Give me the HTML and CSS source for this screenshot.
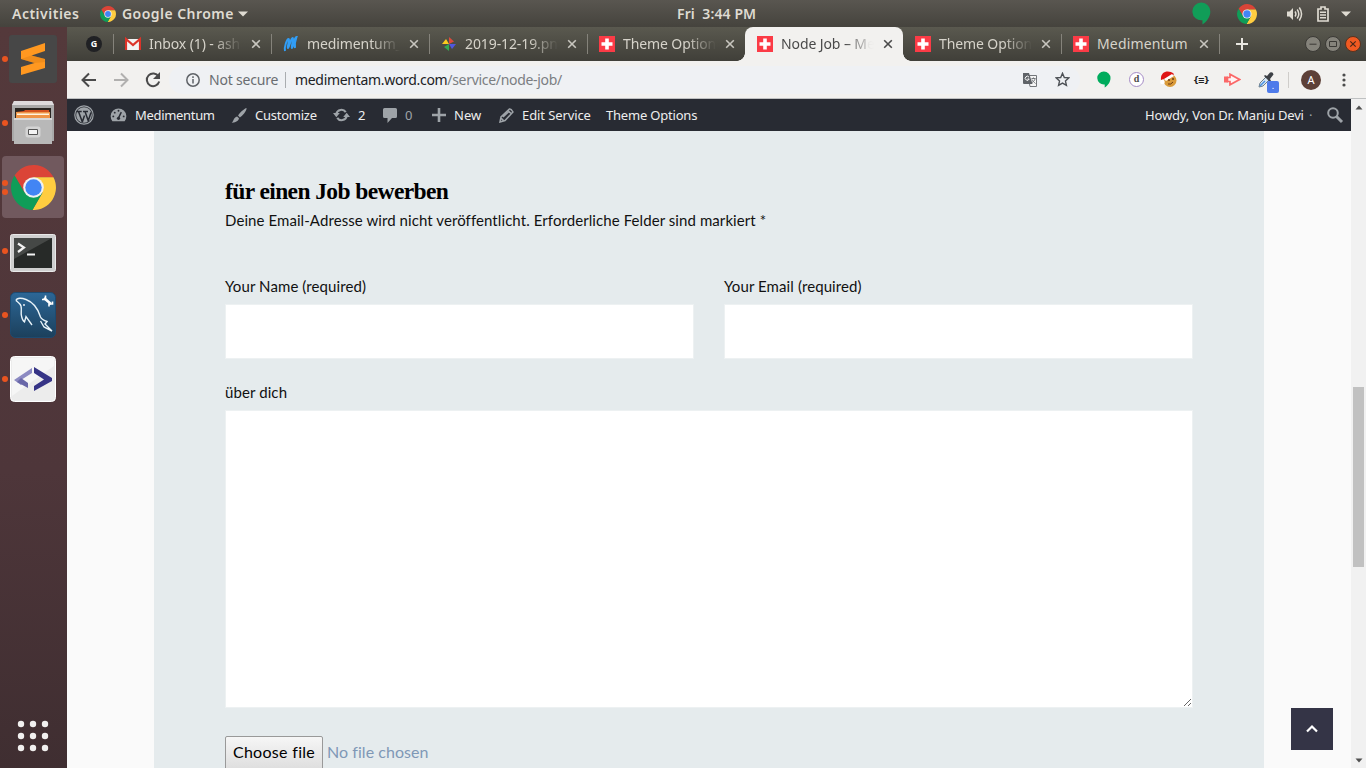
FILE: index.html
```html
<!DOCTYPE html>
<html lang="de">
<head>
<meta charset="utf-8">
<title>Node Job – Medimentum</title>
<link rel="stylesheet" href="styles.css">
</head>
<body>
<svg width="0" height="0" class="defs">
  <symbol id="chrome" viewBox="0 0 48 48">
    <path fill="#db4437" d="M3.8 11.1A24 24 0 0 1 45.3 13H24L14.5 29.5z"/>
    <path fill="#ffcd40" d="M45.3 13A24 24 0 0 1 22.9 48L33.5 29.5L24 13z"/>
    <path fill="#0f9d58" d="M22.9 48A24 24 0 0 1 3.8 11.1L14.5 29.5H33.5z"/>
    <circle cx="24" cy="24" r="11" fill="#f1f1f1"/><circle cx="24" cy="24" r="8.8" fill="#4285f4"/>
  </symbol>
  <symbol id="swiss" viewBox="0 0 16 16"><path fill="#fb3b46" d="M0 0h16v16H0z"/><path fill="#fff" d="M6.200 2.500h3.600v3.700h3.700v3.600H9.800v3.700H6.200V9.800H2.500V6.200h3.700z"/></symbol>
  <symbol id="close" viewBox="0 0 10 10"><path d="M1.200 1.200l7.600 7.600M8.800 1.200L1.200 8.800" stroke="currentColor" stroke-width="1.600" fill="none"/></symbol>
  <symbol id="hangouts" viewBox="0 0 20 24"><path d="M10 .5a9.300 9.300 0 0 1 9.300 9.400c0 5.500-3.500 10.500-8.300 13.600V19A9.300 9.300 0 1 1 10 .5z" fill="currentColor"/></symbol>
</svg>

<header class="topbar">
  <span class="activities">Activities</span>
  <svg class="app-icon" width="16" height="16"><use href="#chrome"/></svg>
  <span class="app-name">Google Chrome</span>
  <svg width="10" height="6" viewBox="0 0 10 6"><path d="M0 .5h10L5 5.500z" fill="#dfdbd2"/></svg>
  <span class="clock">Fri&nbsp; 3:44 PM</span>
  <div class="tray">
    <svg class="hang" width="19" height="23"><use href="#hangouts"/></svg>
    <svg class="tray-chrome" width="20" height="20"><use href="#chrome"/></svg>
    <svg class="sound" width="17" height="16" viewBox="0 0 17 16" fill="none" stroke="#dfdbd2" stroke-width="1.500"><path d="M1 5.500h2.500L7 2v12l-3.500-3.500H1z" fill="#dfdbd2" stroke="none"/><path d="M9 5.500q1.800 2.500 0 5M11.200 3.500q3.200 4.500 0 9M13.300 1.500q4.500 6.500 0 13"/></svg>
    <svg class="battery" width="12" height="16" viewBox="0 0 12 16"><path d="M1 3h3V1h4v2h3v12H1z" fill="none" stroke="#dfdbd2" stroke-width="1.700"/><path d="M3 6.200h6M3 9h6M3 11.800h6" stroke="#dfdbd2" stroke-width="1.500"/></svg>
    <svg width="10" height="6" viewBox="0 0 10 6"><path d="M0 .5h10L5 5.500z" fill="#dfdbd2"/></svg>
  </div>
</header>

<div class="desktop">
  <nav class="dock">
    <div class="dock-item">
      <svg width="48" height="48" viewBox="0 0 48 48"><rect width="48" height="48" rx="3" fill="#474747"/><path fill="#ff9820" d="M12 16L36 8v8L22.500 20.500 36 24v9L12 40v-8l13.500-4L12 24z"/><path fill="#d97c13" d="M22.500 20.500L36 24v3l-10.500 1L12 24z" opacity=".4"/></svg>
      <i class="dot"></i>
    </div>
    <div class="dock-item">
      <svg width="44" height="46" viewBox="0 0 44 46"><path d="M3 1h38l2 4v36h-2v3H3v-3H1V5z" fill="#a9a9a9"/><path d="M3 1h38l2 4H1z" fill="#dedbdd"/><path d="M4 8h36v12H4z" fill="#292522"/><path d="M5 12l8-1 1-1h24l1 10H5z" fill="#d65420"/><path d="M5 12h34v8H5z" fill="#ef9547"/><path d="M6 13.500h32v1.500H6z" fill="#fff4df"/><path d="M3 18h38v26H3z" fill="#b8b8b8"/><path d="M3 18h38v2H3z" fill="#d8d8d8"/><rect x="16" y="28" width="12" height="8" rx="1" fill="#eee" stroke="#d4d4d4" stroke-width="3"/><path d="M17.500 29.500h9v5h-9z" fill="#f3f3f3" stroke="#555"/></svg>
      <i class="dot"></i>
    </div>
    <div class="dock-item">
      <div class="dock-active"><svg width="45" height="45"><use href="#chrome"/></svg></div>
      <i class="dot"></i><i class="dot second"></i>
    </div>
    <div class="dock-item low">
      <svg width="46" height="38" viewBox="0 0 46 38"><rect x=".5" y=".5" width="45" height="37" rx="2" fill="#cfcfcf" stroke="#e9e9e9"/><path d="M4 4h38v30H4z" fill="#272a28"/><path d="M4 4h38L4 25z" fill="#454846"/><path d="M8 9.500l6 4-6 4.500M17 20.500h8" fill="none" stroke="#f2f2f2" stroke-width="2.200"/></svg>
      <i class="dot"></i>
    </div>
    <div class="dock-item">
      <svg width="46" height="46" viewBox="0 0 46 46"><defs><linearGradient id="sea" x2="0" y2="1"><stop stop-color="#2c6797"/><stop offset="1" stop-color="#1c405c"/></linearGradient></defs><rect x=".5" y=".5" width="45" height="45" rx="5" fill="url(#sea)" stroke="#1d4a70"/><path d="M6 8.500C7 5.500 12 6 16 7.500c8 3 12 9 14.500 17.500 1 2 3.500 3.500 6.500 4.500l-2 2.500 7 7-8-4-3.500-6M6 8.500c1.500 1.500 4 2.500 5 5.500 1 4-.5 7 .5 10 .5 3 1.500 5 3 6l1.500-5.500L22 33" fill="none" stroke="#e8f3f9" stroke-width="1.400"/><circle cx="14" cy="13" r=".9" fill="#fff"/><path d="M34 6l7 6" stroke="#fff" stroke-width="2.600"/><path d="M32 7.500h3.500V3.500M42.500 9.500V12H39v2.500" fill="none" stroke="#fff" stroke-width="1.600"/></svg>
      <i class="dot"></i>
    </div>
    <div class="dock-item">
      <svg width="46" height="46" viewBox="0 0 46 46"><rect x=".5" y=".5" width="45" height="45" rx="4" fill="#ececec" stroke="#fff"/><path d="M2 2h42v8L2 40z" fill="#f6f6f6"/><path fill="#8c8ac2" d="M22 12v5l-11 7 3 2-3 3-7-5z"/><path fill="#6967a8" d="M11 22l7 5v5L7 26z"/><path fill="#363486" d="M24 11l18 11v3L24 35v-5l10-6.500L24 17z"/></svg>
      <i class="dot"></i>
    </div>
    <svg class="apps" width="32" height="32" viewBox="0 0 32 32" fill="#f1f0ef"><circle cx="4" cy="4" r="3.200"/><circle cx="16" cy="4" r="3.200"/><circle cx="28" cy="4" r="3.200"/><circle cx="4" cy="16" r="3.200"/><circle cx="16" cy="16" r="3.200"/><circle cx="28" cy="16" r="3.200"/><circle cx="4" cy="28" r="3.200"/><circle cx="16" cy="28" r="3.200"/><circle cx="28" cy="28" r="3.200"/></svg>
  </nav>

  <div class="browser">
    <div class="tabs">
      <div class="pinned"><span class="g-icon">G</span></div>
      <div class="tab"><svg width="16" height="16" viewBox="0 0 16 16"><path d="M1 3h14v11H1z" fill="#f3f3f3"/><path d="M1 14V3l7 6 7-6v11" fill="none" stroke="#dc3329" stroke-width="2.200"/></svg><span class="title">Inbox (1) - ash</span><svg class="x" width="10" height="10"><use href="#close"/></svg></div>
      <div class="tab"><svg width="16" height="16" viewBox="0 0 16 16"><path d="M2 15C1 11 4 3 5.500 3S4 12 5 12 8 2 9.500 2 8 12 9 12s2-11 4.500-11c-1.500 4-2 8-1.500 11" fill="none" stroke="#319df5" stroke-width="2"/></svg><span class="title">medimentum_</span><svg class="x" width="10" height="10"><use href="#close"/></svg></div>
      <div class="tab"><svg width="16" height="16" viewBox="0 0 16 16"><path d="M8 8V1l5 4.500L8 8z" fill="#de4a3c"/><path d="M8 8h7l-4 5z" fill="#5057df"/><path d="M8 8v7l-5-4z" fill="#34a853"/><path d="M8 8H1l4-5z" fill="#fbcb1e"/></svg><span class="title">2019-12-19.pn</span><svg class="x" width="10" height="10"><use href="#close"/></svg></div>
      <div class="tab"><svg width="16" height="16"><use href="#swiss"/></svg><span class="title">Theme Option</span><svg class="x" width="10" height="10"><use href="#close"/></svg></div>
      <div class="tab active"><svg width="16" height="16"><use href="#swiss"/></svg><span class="title">Node Job – M<span class="rest">e</span></span><svg class="x" width="10" height="10"><use href="#close"/></svg></div>
      <div class="tab after-active"><svg width="16" height="16"><use href="#swiss"/></svg><span class="title">Theme Option</span><svg class="x" width="10" height="10"><use href="#close"/></svg></div>
      <div class="tab"><svg width="16" height="16"><use href="#swiss"/></svg><span class="title whole">Medimentum</span><svg class="x" width="10" height="10"><use href="#close"/></svg></div>
      <div class="new-tab"><svg width="12" height="12" viewBox="0 0 12 12"><path d="M6 0v12M0 6h12" stroke="#e8e6e0" stroke-width="2"/></svg></div>
      <div class="window-buttons">
        <svg width="16" height="16" viewBox="0 0 16 16"><circle cx="8" cy="8" r="7.500" fill="#85837b" stroke="#3b3a36"/><path d="M4.500 8.200h7" stroke="#3a3935"/></svg>
        <svg width="16" height="16" viewBox="0 0 16 16"><circle cx="8" cy="8" r="7.500" fill="#85837b" stroke="#3b3a36"/><path d="M4.500 5.500h7v5h-7z" fill="none" stroke="#3a3935"/></svg>
        <svg width="16" height="16" viewBox="0 0 16 16"><circle cx="8" cy="8" r="7.500" fill="#f05a22" stroke="#58321f"/><path d="M5.300 5.300l5.400 5.400M10.700 5.300l-5.400 5.400" stroke="#4a2818" stroke-width="1.200"/></svg>
      </div>
    </div>

    <div class="toolbar">
      <svg width="16" height="16" viewBox="0 0 16 16" fill="none" stroke="#4a4a4a" stroke-width="2"><path d="M15 8H2M8 1.500L1.500 8 8 14.500"/></svg>
      <svg width="16" height="16" viewBox="0 0 16 16" fill="none" stroke="#b1b0af" stroke-width="2"><path d="M1 8h13M8 1.500L14.500 8 8 14.500"/></svg>
      <svg width="16" height="16" viewBox="0 0 16 16"><path d="M13.500 4.500A6.300 6.300 0 1 0 14.200 9.500" fill="none" stroke="#4a4a4a" stroke-width="2"/><path d="M15 0v7H8z" fill="#4a4a4a"/></svg>
      <div class="address">
        <svg width="14" height="14" viewBox="0 0 14 14"><circle cx="7" cy="7" r="6.200" fill="none" stroke="#5f6368" stroke-width="1.500"/><path d="M7 6v4.500M7 3.300v1.600" stroke="#5f6368" stroke-width="1.500"/></svg>
        <span class="secure">Not secure</span>
        <span class="url"><span class="host">medimentam.word.com</span><span class="path">/service/node-job/</span></span>
        <svg class="translate" width="14" height="14" viewBox="0 0 14 14"><path d="M5 2.500h8.500v11H7z" fill="#f5f5f5" stroke="#73767a"/><path d="M0 0h6l3.500 11H1a1 1 0 0 1-1-1z" fill="#5f6368"/><path d="M6 4.200A2 2 0 1 0 6.200 6H4.500" fill="none" stroke="#fff"/><path d="M8.500 5.500h4M10.500 4.500v1M12 5.500c0 2-1.500 3-3 4M9 6.500c.5 1.500 2 2.500 3.500 4" fill="none" stroke="#73767a"/></svg>
        <svg width="15" height="15" viewBox="0 0 24 24"><path d="M12 2l2.900 6.800 7.300.6-5.500 4.900 1.600 7.200L12 17.700l-6.300 3.800 1.600-7.200-5.500-4.900 7.300-.6z" fill="none" stroke="#4d5156" stroke-width="2.200"/></svg>
      </div>
      <div class="extensions">
        <svg class="green" width="14" height="17"><use href="#hangouts"/></svg>
        <span class="d-icon">d</span>
        <svg width="17" height="17" viewBox="0 0 17 17"><circle cx="10" cy="9.500" r="6.500" fill="#d99a39"/><path d="M1 9C0 1 8-2 14 3l-3 4-7 1z" fill="#df1515"/><path d="M4 8l8-5 2 2-8 5z" fill="#fff"/><circle cx="2.500" cy="11" r="2.300" fill="#fff"/><circle cx="9" cy="9" r="1" fill="#6d3a16"/><circle cx="13" cy="8" r="1" fill="#6d3a16"/><path d="M8 13q3 1 5-2" stroke="#6d3a16" fill="none"/></svg>
        <span class="braces">{≡}</span>
        <svg width="17" height="13" viewBox="0 0 17 13"><path d="M0 3.500h4v6H0z" fill="#fb6868"/><path d="M6 4.500V1.200l9.500 5.300L6 11.800V8.500H3.500v-4z" fill="#fff4f4" stroke="#fb6868" stroke-width="1.700"/></svg>
        <div class="dropper">
          <svg width="16" height="16" viewBox="0 0 16 16"><path d="M1 15l1-4 6-6 3 3-6 6z" fill="#d7e6f3" stroke="#6a7e8c"/><path d="M2 14l5-5" stroke="#4a90e2" stroke-width="1.500"/><path d="M7 3l2 1 3-3.500q3-1 3.500 2L12 7l1 2-1 1-6-6z" fill="#3d4146"/></svg>
          <span class="badge">.</span>
        </div>
      </div>
      <span class="avatar">A</span>
      <svg class="menu" width="4" height="14" viewBox="0 0 4 14" fill="#4c4c4c"><circle cx="2" cy="2" r="1.600"/><circle cx="2" cy="7" r="1.600"/><circle cx="2" cy="12" r="1.600"/></svg>
    </div>

    <div class="viewport">
      <div class="page">
        <div class="adminbar">
          <div><svg width="20" height="20" viewBox="0 0 20 20"><circle cx="10" cy="10" r="9.200" fill="none" stroke="#9ea3a8" stroke-width="1.200"/><circle cx="10" cy="10" r="7.800" fill="#9ea3a8"/><path d="M2.500 6.500h5.200M9 6.500h5M4.500 6.500l4 11M11 6.500l3.500 10M8.300 17l2.200-6.500M14 16.500l3-9" stroke="#282b33" stroke-width="1.500" fill="none"/></svg></div>
          <div><svg width="17" height="16" viewBox="0 0 18 16"><path d="M2.500 14.500A8.300 8.300 0 1 1 15.500 14.500z" fill="#9ea3a8"/><path d="M9 11L12 5" stroke="#282b33" stroke-width="1.500"/><g fill="#282b33"><circle cx="9" cy="11.500" r="1.700"/><circle cx="3.500" cy="9.500" r="1"/><circle cx="5" cy="5.500" r="1"/><circle cx="9" cy="3.500" r="1"/><circle cx="14.500" cy="9.500" r="1"/></g></svg><span class="t-med">Medimentum</span></div>
          <div><svg width="16" height="17" viewBox="0 0 17 17" fill="#9ea3a8"><path d="M16.500.5c-2 0-8 6-9 8l2 2c2-1 7.500-7 7-10zM6.500 9.500l2 2c-.5 3-4 5-8 4.500 2.500-1 2-5.500 6-6.500z"/></svg><span class="t-cust">Customize</span></div>
          <div><svg width="17" height="14" viewBox="0 0 18 14"><path d="M3.500 6A5.500 5.500 0 0 1 13.500 4M14.500 8A5.500 5.500 0 0 1 4.500 10" fill="none" stroke="#9ea3a8" stroke-width="2.200"/><path d="M0 5h7.200L3.500 9.500zM18 9h-7.200l3.700-4.500z" fill="#9ea3a8"/></svg><span>2</span></div>
          <div class="muted"><svg width="14" height="15" viewBox="0 0 14 15"><path d="M1.500 0h11A1.500 1.500 0 0 1 14 1.500v7a1.500 1.500 0 0 1-1.500 1.500H9l-4.500 5V10h-3A1.500 1.500 0 0 1 0 8.500v-7A1.500 1.500 0 0 1 1.500 0z" fill="#9ea3a8"/></svg><span>0</span></div>
          <div><svg width="14" height="14" viewBox="0 0 14 14"><path d="M7 0v14M0 7h14" stroke="#9ea3a8" stroke-width="2.600"/></svg><span>New</span></div>
          <div><svg width="15" height="15" viewBox="0 0 15 15" fill="none" stroke="#9ea3a8" stroke-width="1.500"><path d="M1 14l1-5L10.500 1q1.500-.5 3.500 3L6 12.500zM9 2.500l3.500 3.500M4 9l6-5.500M2 10l3 3"/></svg><span class="t-edit">Edit Service</span></div>
          <div><span class="t-theme">Theme Options</span></div>
          <div><span class="t-howdy">Howdy, Von Dr. Manju Devi</span></div>
          <div class="muted">·</div>
          <div><svg width="17" height="17" viewBox="0 0 17 17" fill="none" stroke="#9ea3a8"><circle cx="6" cy="6" r="4.800" stroke-width="2"/><path d="M9.500 9.500l5.500 5.500" stroke-width="3"/></svg></div>
        </div>
        <main class="panel">
          <h3>für einen Job bewerben</h3>
          <p class="note">Deine Email-Adresse wird nicht veröffentlicht. Erforderliche Felder sind markiert *</p>
          <form>
            <div class="pair">
              <div class="field"><label for="name">Your Name (required)</label><input id="name" type="text"></div>
              <div class="field"><label for="mail">Your Email (required)</label><input id="mail" type="text"></div>
            </div>
            <div class="field about"><label for="about">über dich</label><textarea id="about"></textarea></div>
            <div class="file"><button type="button">Choose file</button><span>No file chosen</span></div>
          </form>
        </main>
        <a class="to-top"><svg width="14" height="10" viewBox="0 0 14 10"><path d="M2 7.500l5-5 5 5" fill="none" stroke="#fff" stroke-width="2.200"/></svg></a>
      </div>
      <div class="scrollbar">
        <svg width="8" height="5" viewBox="0 0 8 5"><path d="M.5 4.500h7L4 .5z" fill="#505050"/></svg>
        <div class="thumb"></div>
        <svg width="8" height="5" viewBox="0 0 8 5"><path d="M.5.5h7L4 4.500z" fill="#505050"/></svg>
      </div>
    </div>
  </div>
</div>
</body>
</html>
```
FILE: styles.css
```css
* { box-sizing: border-box; }
body { margin: 0; width: 1366px; height: 768px; overflow: hidden; font-family: "Noto Sans", sans-serif; background: #fafafa; }
svg { display: block; flex: none; }
.defs { position: absolute; }
span { white-space: nowrap; }

.topbar { height: 27px; display: flex; align-items: center; position: relative; padding-left: 12px; background: linear-gradient(#595650, #45433d); color: #dfdbd2; font-size: 14px; font-weight: 600; }
.activities { width: 88px; letter-spacing: .5px; }
.app-icon { margin-right: 6px; }
.app-name { width: 116px; letter-spacing: .45px; }
.clock { position: absolute; left: 677px; top: 4px; letter-spacing: .1px; }
.tray { margin-left: auto; display: flex; align-items: center; margin-right: 15px; }
.hang { color: #119d58; margin-right: 26px; }
.tray-chrome { margin-right: 29px; }
.sound { margin-right: 14px; }
.battery { margin-right: 12px; }

.desktop { display: flex; height: 741px; }
.dock { width: 67px; display: flex; flex-direction: column; background: linear-gradient(#54393b, #4e363a 60%, #3f2e31); }
.dock-item { height: 64px; width: 66px; display: flex; align-items: center; justify-content: center; position: relative; }
.low { padding-top: 3px; }
.dock-active { width: 62px; height: 62px; border-radius: 4px; background: #71595e; display: flex; align-items: center; justify-content: center; }
.dot { position: absolute; left: 2px; top: 29px; width: 6px; height: 6px; border-radius: 50%; background: #e95420; }
.dock-active + .dot { top: 25px; }
.dot.second { top: 34px; }
.apps { margin: auto 0 16px 17px; }

.browser { flex: 1; display: flex; flex-direction: column; min-width: 0; }
.tabs { height: 34px; display: flex; align-items: center; background: linear-gradient(#5a594f, #403f39); color: #d6d3ca; font-size: 14px; }
.pinned { width: 46px; padding-left: 19px; }
.g-icon { display: block; width: 16px; height: 16px; border-radius: 50%; background: #202124; color: #fff; font: 700 9px/16px "Open Sans", sans-serif; text-align: center; }
.tab { width: 158px; height: 34px; display: flex; align-items: center; padding-left: 12px; background: linear-gradient(#85837b, #85837b) 0 50% / 1px 20px no-repeat; }
.title { width: 94px; margin: 0 8px; padding-bottom: 2px; letter-spacing: -.1px; mask-image: linear-gradient(90deg, #000 68%, transparent 99%); }
.title.whole { mask-image: none; letter-spacing: .15px; }
.rest { opacity: .3; }
.x { color: #c8c6bf; }
.active { background: #f2f1ef; color: #4a4a4a; border-radius: 8px 8px 0 0; position: relative; }
.active::before, .active::after { content: ""; position: absolute; bottom: 0; width: 8px; height: 8px; }
.active::before { left: -8px; background: radial-gradient(circle at 0 0, transparent 7.5px, #f2f1ef 8px); }
.active::after { right: -8px; background: radial-gradient(circle at 100% 0, transparent 7.5px, #f2f1ef 8px); }
.active .x { color: #4a4a4a; }
.after-active { background: none; }
.new-tab { width: 30px; padding-left: 17px; background: linear-gradient(#85837b, #85837b) 0 50% / 1px 20px no-repeat; height: 34px; display: flex; align-items: center; }
.window-buttons { margin-left: auto; margin-right: 5px; display: flex; gap: 4px; }

.toolbar { height: 38px; display: flex; align-items: center; padding-left: 14px; background: #f2f1ef; border-bottom: 1px solid #bfc1c2; }
.toolbar > svg { margin-right: 16px; }
.address { height: 28px; width: 911px; margin-left: -8px; border-radius: 14px; background: #eff1f4; display: flex; align-items: center; padding: 0 10px 0 17px; font-size: 14px; color: #6a6d71; }
.secure { margin-left: 9px; width: 77px; border-right: 1px solid #aaadb0; line-height: 16px; letter-spacing: -.2px; }
.url { margin-left: 9px; letter-spacing: -.31px; }
.host { color: #202124; }
.path { color: #7b7e82; }
.translate { margin-left: auto; margin-right: 18px; }
.extensions { display: flex; align-items: center; width: 192px; margin-left: 17px; gap: 17px; border-right: 1px solid #cfcdca; height: 16px; }
.green { color: #00ac5d; margin-top: -1px; }
.d-icon { width: 15px; height: 15px; margin-left: 1px; border: 1px solid #a58bc6; border-radius: 50%; background: #fff; font: 700 10px/12px "Liberation Serif", serif; text-align: center; color: #4c4c4c; }
.extensions .d-icon + svg { margin-left: -1px; }
.braces { width: 14px; margin-left: -1px; font: 700 8.5px "DejaVu Sans", sans-serif; letter-spacing: -1.2px; color: #222; }
.dropper { position: relative; }
.badge { position: absolute; left: 9px; top: 9px; width: 12px; height: 12px; border-radius: 2px; background: #4f7bea; color: #fff; font-size: 9px; line-height: 10px; text-align: center; }
.avatar { width: 20px; height: 20px; margin-left: 12px; border-radius: 50%; background: #5d4037; color: #fff; font-size: 11px; line-height: 20px; text-align: center; }
.toolbar > .menu { margin-left: 21px; margin-right: 0; }

.viewport { flex: 1; display: flex; min-height: 0; }
.page { flex: 1; display: flex; flex-direction: column; align-items: center; background: #fafafa; position: relative; min-width: 0; }
.adminbar { align-self: stretch; height: 32px; flex: none; padding-left: 7px; display: grid; grid-template-columns: 36px 121px 102px 50px 49px 67px 107px 539px 164px 18px 24px; align-items: center; background: #282b33; color: #eee; font-size: 13px; }
.adminbar > div { display: flex; align-items: center; gap: 8px; }
.adminbar .muted { color: #9ea3a8; }
.t-med { letter-spacing: -.32px; }
.t-cust { letter-spacing: -.25px; }
.t-edit { letter-spacing: -.1px; }
.t-theme { letter-spacing: -.2px; }
.t-howdy { letter-spacing: -.18px; }

.panel { width: 1110px; flex: 1; min-height: 0; overflow: hidden; padding: 46px 71px 0; background: #e5ebed; color: #111; font-family: Lato, sans-serif; }
h3 { margin: 0; height: 30px; font: 700 23.5px/29px "Liberation Serif", serif; letter-spacing: -.6px; color: #000; white-space: nowrap; }
.note { margin: 1px 0 0; font-size: 15px; line-height: 24px; letter-spacing: .08px; white-space: nowrap; }
form { padding-top: 42px; }
.pair { display: grid; grid-template-columns: 469px 469px; column-gap: 30px; }
.field { display: flex; flex-direction: column; font-size: 15px; letter-spacing: .1px; }
label { line-height: 24px; height: 30px; }
input { height: 55px; border: 1px solid #edf1f2; background: #fff; padding: 0; }
textarea { height: 298px; border: 1px solid #edf1f2; background: #fff; }
.about { margin-top: 21px; }
.file { margin-top: 28px; display: flex; align-items: center; gap: 4px; font-size: 16px; color: #7f98b6; letter-spacing: .05px; }
.file span { padding-bottom: 3px; }
button { width: 98px; height: 34px; padding: 0 0 3px; border: 1px solid #999; border-radius: 2px; background: linear-gradient(#f6f6f6, #dedede); font: 16px Lato, sans-serif; letter-spacing: .3px; color: #000; }
.to-top { position: absolute; left: 1224px; top: 609px; width: 42px; height: 42px; background: #343446; display: flex; align-items: center; justify-content: center; }
.scrollbar { width: 15px; background: #f1f1f1; display: flex; flex-direction: column; align-items: center; padding: 6px 0 5px; }
.thumb { width: 11px; height: 180px; margin: 277px 0 auto; background: #c1c1c1; }
```
